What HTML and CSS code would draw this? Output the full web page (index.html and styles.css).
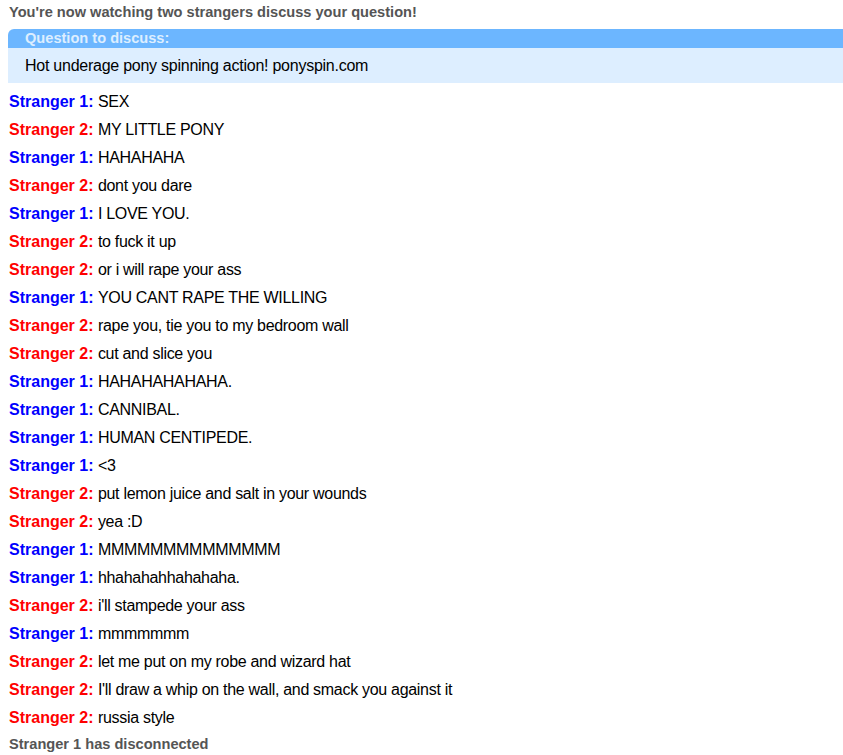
FILE: index.html
```html
<!DOCTYPE html>
<html>
<head>
<meta charset="utf-8">
<link rel="stylesheet" href="styles.css">
</head>
<body>
<div class="log">
  <p class="status">You're now watching two strangers discuss your question!</p>
  <div class="question">
    <div class="qhead">Question to discuss:</div>
    <div class="qbody">Hot underage pony spinning action! ponyspin.com</div>
  </div>
  <p class="msg"><strong class="s1">Stranger 1:</strong> <span>SEX</span></p>
  <p class="msg"><strong class="s2">Stranger 2:</strong> <span>MY LITTLE PONY</span></p>
  <p class="msg"><strong class="s1">Stranger 1:</strong> <span>HAHAHAHA</span></p>
  <p class="msg"><strong class="s2">Stranger 2:</strong> <span>dont you dare</span></p>
  <p class="msg"><strong class="s1">Stranger 1:</strong> <span>I LOVE YOU.</span></p>
  <p class="msg"><strong class="s2">Stranger 2:</strong> <span>to fuck it up</span></p>
  <p class="msg"><strong class="s2">Stranger 2:</strong> <span>or i will rape your ass</span></p>
  <p class="msg"><strong class="s1">Stranger 1:</strong> <span>YOU CANT RAPE THE WILLING</span></p>
  <p class="msg"><strong class="s2">Stranger 2:</strong> <span>rape you, tie you to my bedroom wall</span></p>
  <p class="msg"><strong class="s2">Stranger 2:</strong> <span>cut and slice you</span></p>
  <p class="msg"><strong class="s1">Stranger 1:</strong> <span>HAHAHAHAHAHA.</span></p>
  <p class="msg"><strong class="s1">Stranger 1:</strong> <span>CANNIBAL.</span></p>
  <p class="msg"><strong class="s1">Stranger 1:</strong> <span>HUMAN CENTIPEDE.</span></p>
  <p class="msg"><strong class="s1">Stranger 1:</strong> <span>&lt;3</span></p>
  <p class="msg"><strong class="s2">Stranger 2:</strong> <span>put lemon juice and salt in your wounds</span></p>
  <p class="msg"><strong class="s2">Stranger 2:</strong> <span>yea :D</span></p>
  <p class="msg"><strong class="s1">Stranger 1:</strong> <span>MMMMMMMMMMMMMM</span></p>
  <p class="msg"><strong class="s1">Stranger 1:</strong> <span>hhahahahhahahaha.</span></p>
  <p class="msg"><strong class="s2">Stranger 2:</strong> <span>i'll stampede your ass</span></p>
  <p class="msg"><strong class="s1">Stranger 1:</strong> <span>mmmmmmm</span></p>
  <p class="msg"><strong class="s2">Stranger 2:</strong> <span>let me put on my robe and wizard hat</span></p>
  <p class="msg"><strong class="s2">Stranger 2:</strong> <span>I'll draw a whip on the wall, and smack you against it</span></p>
  <p class="msg"><strong class="s2">Stranger 2:</strong> <span>russia style</span></p>
  <p class="status end">Stranger 1 has disconnected</p>
</div>
</body>
</html>
```
FILE: styles.css
```css
html, body {
  margin: 0;
  padding: 0;
  background: #fff;
}
body {
  font-family: "Liberation Sans", Arial, sans-serif;
}
.log {
  padding: 0 0 0 8px;
}
.status {
  margin: 0;
  padding: 4px 0 0 1px;
  font-size: 14.6px;
  line-height: 16px;
  font-weight: bold;
  color: #555;
}
.status.end {
  padding-top: 4px;
}
.question {
  margin-top: 9px;
  margin-bottom: 5px;
}
.qhead {
  background: #6cb6ff;
  color: #ddeeff;
  font-size: 14.6px;
  font-weight: bold;
  line-height: 19px;
  height: 19px;
  padding-left: 17px;
  border-top-left-radius: 6px;
}
.qbody {
  background: #ddeeff;
  color: #000;
  font-size: 16px;
  letter-spacing: -0.25px;
  line-height: 35px;
  height: 35px;
  padding-left: 17px;
}
.msg {
  margin: 0;
  padding-left: 1px;
  font-size: 16px;
  line-height: 28px;
  color: #000;
}
.msg span {
  letter-spacing: -0.3px;
}
.s1 { color: #0000ff; }
.s2 { color: #ff0000; }
```
